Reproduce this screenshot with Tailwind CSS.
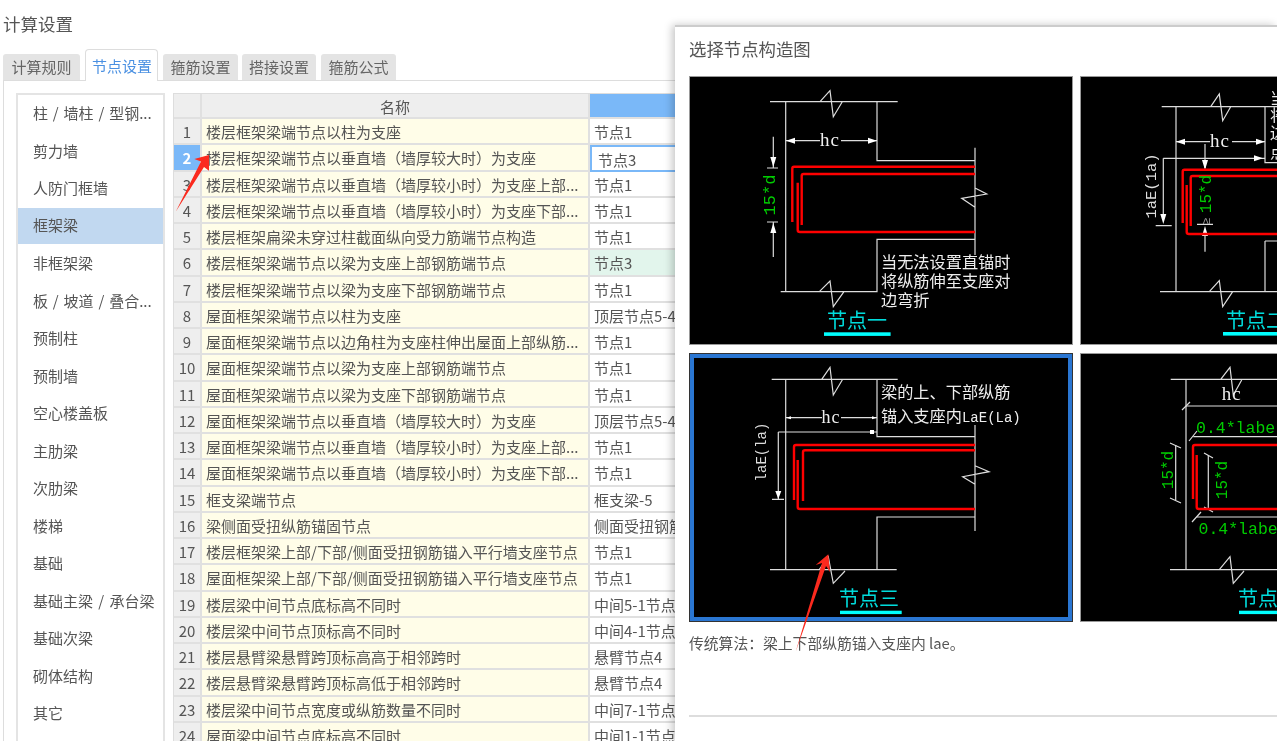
<!DOCTYPE html>
<html lang="zh">
<head>
<meta charset="utf-8">
<script src="https://cdn.jsdelivr.net/npm/@tailwindcss/browser@4"></script>
<title>计算设置</title>
</head>
<body class="bg-white">
<div class="relative w-[1277px] h-[741px] overflow-hidden bg-white text-[#555] font-['Noto_Sans_CJK_SC',sans-serif] blur-[0.35px]">
  <h1 class="pl-[3px] h-[49px] pt-[12px] text-[17.5px] leading-[24px] font-normal text-[#555]">计算设置</h1>
  <div class="flex items-end pl-[3px] h-[31px] text-[15px]">
    <div class="w-[77px] h-[26px] rounded-t-[3px] bg-[#e4e4e4] text-center leading-[26px] text-[#666]">计算规则</div>
    <div class="w-[73px] ml-[5px] pl-[1px] h-[32px] -mb-[1px] relative z-10 rounded-t-[4px] border border-b-0 border-[#ddd] bg-white text-center leading-[31px] text-[#4a90e2]">节点设置</div>
    <div class="w-[75px] ml-[5px] h-[26px] rounded-t-[3px] bg-[#e4e4e4] text-center leading-[26px] text-[#666]">箍筋设置</div>
    <div class="w-[74px] ml-[4px] h-[26px] rounded-t-[3px] bg-[#e4e4e4] text-center leading-[26px] text-[#666]">搭接设置</div>
    <div class="w-[75px] ml-[5px] h-[26px] rounded-t-[3px] bg-[#e4e4e4] text-center leading-[26px] text-[#666]">箍筋公式</div>
  </div>
  <div class="ml-[3px] flex items-start gap-[8px] border-l border-t border-[#ddd] pl-[12px] pt-[12px] h-[700px] text-[15px]">
    <div class="w-[149px] h-[700px] shrink-0 border-2 border-[#e4e4e4] text-[#555]">
      <div class="h-[37.5px] leading-[35px] pl-[15px] [word-spacing:1.5px]">柱 / 墙柱 / 型钢...</div>
      <div class="h-[37.5px] leading-[35px] pl-[15px]">剪力墙</div>
      <div class="h-[37.5px] leading-[35px] pl-[15px]">人防门框墙</div>
      <div class="h-[36px] leading-[34px] pl-[15px] my-[0.75px] bg-[#c1d8f0]">框架梁</div>
      <div class="h-[37.5px] leading-[35px] pl-[15px]">非框架梁</div>
      <div class="h-[37.5px] leading-[35px] pl-[15px] [word-spacing:1.5px]">板 / 坡道 / 叠合...</div>
      <div class="h-[37.5px] leading-[35px] pl-[15px]">预制柱</div>
      <div class="h-[37.5px] leading-[35px] pl-[15px]">预制墙</div>
      <div class="h-[37.5px] leading-[35px] pl-[15px]">空心楼盖板</div>
      <div class="h-[37.5px] leading-[35px] pl-[15px]">主肋梁</div>
      <div class="h-[37.5px] leading-[35px] pl-[15px]">次肋梁</div>
      <div class="h-[37.5px] leading-[35px] pl-[15px]">楼梯</div>
      <div class="h-[37.5px] leading-[35px] pl-[15px]">基础</div>
      <div class="h-[37.5px] leading-[35px] pl-[15px] [word-spacing:2px]">基础主梁 / 承台梁</div>
      <div class="h-[37.5px] leading-[35px] pl-[15px]">基础次梁</div>
      <div class="h-[37.5px] leading-[35px] pl-[15px]">砌体结构</div>
      <div class="h-[37.5px] leading-[35px] pl-[15px]">其它</div>
    </div>
    <div class="w-[510px] shrink-0 grid grid-cols-[28px_388px_94px] grid-rows-[25px] auto-rows-[26.25px] border-l border-t border-[#ddd] leading-[25px] whitespace-nowrap [&>div]:overflow-hidden [&>div]:border-b-2 [&>div]:border-r-2 [&>div]:border-[#e0e0e0] [&>div:nth-child(3n+1)]:bg-[#eee] [&>div:nth-child(3n+1)]:text-center [&>div:nth-child(3n+2)]:bg-[#fffde8] [&>div:nth-child(3n+2)]:pl-[4px] [&>div:nth-child(3n)]:pl-[4px]">
      <div></div><div class="!bg-[#eee] text-center !pl-0">名称</div><div class="!bg-[#7ab8f8]"></div>
      <div>1</div><div>楼层框架梁端节点以柱为支座</div><div>节点1</div>
      <div class="!bg-[#7ab8f8] text-white font-bold">2</div><div>楼层框架梁端节点以垂直墙（墙厚较大时）为支座</div><div class="!pl-[6px] !border-2 !border-[#7ab8f8]">节点3</div>
      <div>3</div><div>楼层框架梁端节点以垂直墙（墙厚较小时）为支座上部...</div><div>节点1</div>
      <div>4</div><div>楼层框架梁端节点以垂直墙（墙厚较小时）为支座下部...</div><div>节点1</div>
      <div>5</div><div>楼层框架扁梁未穿过柱截面纵向受力筋端节点构造</div><div>节点1</div>
      <div>6</div><div>楼层框架梁端节点以梁为支座上部钢筋端节点</div><div class="bg-[#e2f5ec]">节点3</div>
      <div>7</div><div>楼层框架梁端节点以梁为支座下部钢筋端节点</div><div>节点1</div>
      <div>8</div><div>屋面框架梁端节点以柱为支座</div><div>顶层节点5-4</div>
      <div>9</div><div>屋面框架梁端节点以边角柱为支座柱伸出屋面上部纵筋...</div><div>节点1</div>
      <div>10</div><div>屋面框架梁端节点以梁为支座上部钢筋端节点</div><div>节点1</div>
      <div>11</div><div>屋面框架梁端节点以梁为支座下部钢筋端节点</div><div>节点1</div>
      <div>12</div><div>屋面框架梁端节点以垂直墙（墙厚较大时）为支座</div><div>顶层节点5-4</div>
      <div>13</div><div>屋面框架梁端节点以垂直墙（墙厚较小时）为支座上部...</div><div>节点1</div>
      <div>14</div><div>屋面框架梁端节点以垂直墙（墙厚较小时）为支座下部...</div><div>节点1</div>
      <div>15</div><div>框支梁端节点</div><div>框支梁-5</div>
      <div>16</div><div>梁侧面受扭纵筋锚固节点</div><div>侧面受扭钢筋</div>
      <div>17</div><div>楼层框架梁上部/下部/侧面受扭钢筋锚入平行墙支座节点</div><div>节点1</div>
      <div>18</div><div>屋面框架梁上部/下部/侧面受扭钢筋锚入平行墙支座节点</div><div>节点1</div>
      <div>19</div><div>楼层梁中间节点底标高不同时</div><div>中间5-1节点</div>
      <div>20</div><div>楼层梁中间节点顶标高不同时</div><div>中间4-1节点</div>
      <div>21</div><div>楼层悬臂梁悬臂跨顶标高高于相邻跨时</div><div>悬臂节点4</div>
      <div>22</div><div>楼层悬臂梁悬臂跨顶标高低于相邻跨时</div><div>悬臂节点4</div>
      <div>23</div><div>楼层梁中间节点宽度或纵筋数量不同时</div><div>中间7-1节点</div>
      <div>24</div><div>屋面梁中间节点底标高不同时</div><div>中间1-1节点</div>
    </div>
  </div>

  <!-- dialog over the page -->
  <div class="absolute left-[675px] top-[25px] w-[602px] h-[716px] bg-white border-t-2 border-[#ccc] shadow-[-3px_0_8px_rgba(0,0,0,0.22)] pl-[14px]">
    <div class="h-[49px] pt-[10px] text-[17.4px] leading-[24px] text-[#555]">选择节点构造图</div>
    <div class="grid grid-cols-[384px_384px] gap-x-[7px] gap-y-[8px] w-[775px]">
      <svg class="block w-[384px] h-[269px] bg-black border border-[#999]" viewBox="690 77 382 267" font-family="'Liberation Mono',monospace">
        <g fill="none" stroke="#ddd" stroke-width="1.2">
          <path d="M770 101.7H897.7M820 101.7L830 90.7L833.3 116.7L842.3 101.7M785.7 101.7V291.7M877 101.7V160.7H975M975 147.7V255M975 188L986.7 194L961.7 198.3L975 207.3M975 239.3H877V291.7H780.7M819.3 291.7L830 281L833.3 306.7L844 291.7"/>
          <path d="M785.7 140.7H820M841 140.7H877M773.3 136.7V168M767 168H778M767 222H778M773.3 222V257"/>
        </g>
        <g fill="#fff"><path d="M786 140.7l9-3v6zM877 140.7l-9-3v6zM773.3 167l-3-10h6zM773.3 223l-3 10h6z"/></g>
        <g fill="none" stroke="#f00" stroke-width="2.4"><path d="M792.3 222V168.5Q792.3 166.7 794 166.7H975M801.7 225V175.8Q801.7 174 803.5 174H975M797.7 182.7V230Q797.7 232 800 232H975"/></g>
        <text x="830" y="146" fill="#eee" font-size="19" letter-spacing="1" text-anchor="middle" font-family="'Liberation Serif',serif">hc</text>
        <text transform="translate(775 195) rotate(-90)" fill="#0c0" font-size="17" text-anchor="middle">15*d</text>
        <g fill="#eee" font-size="16.2" font-family="'Noto Sans CJK SC',sans-serif"><text x="881" y="268">当无法设置直锚时</text><text x="881" y="287">将纵筋伸至支座对</text><text x="881" y="306">边弯折</text></g>
        <text x="827" y="328" fill="#00dcdc" font-size="20" font-family="'Noto Sans CJK SC',sans-serif">节点一</text>
        <rect x="824" y="332.3" width="66.6" height="3.6" fill="#0ff"/>
      </svg>
      <svg class="block w-[384px] h-[269px] bg-black border border-[#999]" viewBox="1081 77 382 267" font-family="'Liberation Mono',monospace">
        <g fill="none" stroke="#ddd" stroke-width="1.2">
          <path d="M1161.7 106.7H1290M1210.7 106.7L1219.3 94L1222.7 120.7L1230.7 106.7M1176 106.7V291.7M1265 106.7V162.7H1290M1265 241H1290M1265 241V291.7M1160 291.7H1290M1209.3 291.7L1219.3 280.7L1222.7 306.7L1232.7 291.7"/>
          <path d="M1176 141.7H1210M1232 141.7H1265M1163.3 158.3H1265M1163.3 158.3V215M1155.7 225.7H1171.7M1205 144V168M1205 230V251.7M1197 224.3H1213"/>
        </g>
        <g fill="#fff"><path d="M1176 141.7l9-3v6zM1265 141.7l-9-3v6zM1263 158.3l-9-3v6zM1163.3 224l-3-10h6zM1205 170l-3-10h6zM1205 226l-3 10h6z"/></g>
        <g fill="none" stroke="#f00" stroke-width="2.4"><path d="M1182.7 223V171.5Q1182.7 169.7 1184.5 169.7H1290M1190.7 226V178Q1190.7 176 1192.5 176H1290M1186.7 185V232Q1186.7 234 1189 234H1290"/></g>
        <text x="1220" y="147" fill="#eee" font-size="19" letter-spacing="1" text-anchor="middle" font-family="'Liberation Serif',serif">hc</text>
        <text transform="translate(1156 186) rotate(-90)" fill="#ddd" font-size="15.5" text-anchor="middle">1aE(1a)</text>
        <text transform="translate(1211 194) rotate(-90)" fill="#0c0" font-size="16" text-anchor="middle">15*d</text>
        <text transform="translate(1210 221) rotate(-90)" fill="#999" font-size="12" text-anchor="middle" font-family="'Liberation Sans',sans-serif">≥</text>
        <g fill="#eee" font-size="16" font-family="'Noto Sans CJK SC',sans-serif"><text x="1270" y="104">当</text><text x="1270" y="121">将</text><text x="1270" y="139">边</text><text x="1270" y="158">点</text></g>
        <text x="1226" y="328" fill="#00dcdc" font-size="20" font-family="'Noto Sans CJK SC',sans-serif">节点二</text>
        <rect x="1223" y="332" width="66" height="3.6" fill="#0ff"/>
      </svg>
      <svg class="block w-[384px] h-[269px] bg-black border-[5px] border-[#2a76d2] outline outline-1 -outline-offset-1 outline-[#333]" viewBox="694 358 374 259" font-family="'Liberation Mono',monospace">
        <g fill="none" stroke="#ddd" stroke-width="1.2">
          <path d="M771.7 379.3H897.7M821.7 379.3L830 367.3L833.3 395L842.7 379.3M785.7 379.3V569.7M877 379.3V436.7H975M975 425V531M975 465.7L989 471.7L962.7 476.7L975 484.3M975 517H877V569.7M770 569.7H896.7M819.3 569.7L828.3 556.7L833.3 583.3L845 571"/>
          <path d="M785.7 417.7H822M841 417.7H877M778.3 432H877M778.3 432V499.3M772 499.3H784"/>
        </g>
        <g fill="#fff"><path d="M786 417.7l5-1.5v3zM877 417.7l-5-1.5v3zM870 430h4v4h-4zM778.3 499l-3-8h6z"/></g>
        <g fill="none" stroke="#f00" stroke-width="2.4"><path d="M794 500V447Q794 445 796 445H975M803 501V452.3Q803 450.3 805 450.3H975M797.7 460V507Q797.7 509 800 509H975"/></g>
        <text x="831" y="423" fill="#eee" font-size="18" letter-spacing="1" text-anchor="middle" font-family="'Liberation Serif',serif">hc</text>
        <text transform="translate(766 452) rotate(-90)" fill="#ddd" font-size="14" text-anchor="middle">laE(la)</text>
        <g fill="#eee" font-size="16.2" font-family="'Noto Sans CJK SC',sans-serif"><text x="881" y="397.5">梁的上、下部纵筋</text><text x="881" y="421.5">锚入支座内<tspan font-size="14" font-family="'Liberation Mono',monospace">LaE(La)</tspan></text></g>
        <text x="839" y="606" fill="#00dcdc" font-size="20" font-family="'Noto Sans CJK SC',sans-serif">节点三</text>
        <rect x="840" y="610.7" width="61.7" height="3.4" fill="#0ff"/>
      </svg>
      <svg class="block w-[384px] h-[269px] bg-black border border-[#999]" viewBox="1081 354 382 267" font-family="'Liberation Mono',monospace">
        <g fill="none" stroke="#ddd" stroke-width="1.2">
          <path d="M1170.7 379.3H1290M1220.7 379.3L1230 367.3L1233.3 395L1241.7 380M1186 379.3V569.7M1170 569.7H1290M1219.3 569.7L1230 556.7L1233.3 583.3L1244 571"/>
          <path d="M1186 406H1290M1193.3 436.7H1290M1196.7 517H1290M1175.7 445V500M1208.3 455V510"/>
          <path d="M1182 410L1190 402M1189 441L1197 431M1192 522L1201 512M1170 443L1181 448M1170 498L1181 503M1204 453L1213 458M1204 507L1213 512"/>
        </g>
        <g fill="none" stroke="#f00" stroke-width="2.4"><path d="M1193 499V447Q1193 445 1195 445H1290M1196.7 455V507Q1196.7 509 1199 509H1290"/></g>
        <text x="1231.7" y="400" fill="#eee" font-size="19" letter-spacing="1" text-anchor="middle" font-family="'Liberation Serif',serif">hc</text>
        <g fill="#0c0" font-size="16.5"><text x="1196" y="432.5">0.4*labe</text><text x="1198.5" y="534">0.4*labe</text></g>
        <text transform="translate(1173 470) rotate(-90)" fill="#0c0" font-size="16" text-anchor="middle">15*d</text>
        <text transform="translate(1227 480) rotate(-90)" fill="#0c0" font-size="16" text-anchor="middle">15*d</text>
        <text x="1238" y="605.5" fill="#00dcdc" font-size="20" font-family="'Noto Sans CJK SC',sans-serif">节点</text>
        <rect x="1239" y="610.7" width="50" height="3.4" fill="#0ff"/>
      </svg>
    </div>
    <p class="mt-[10px] h-[83px] text-[14.8px] leading-[22px] text-[#555] whitespace-nowrap">传统算法：梁上下部纵筋锚入支座内 lae。</p>
    <div class="h-[2px] bg-[#ddd]"></div>
  </div>

  <!-- red annotation arrows -->
  <svg class="absolute left-0 top-0 w-[1277px] h-[741px] pointer-events-none z-20" viewBox="0 0 1277 741">
    <polygon fill="#fb2a1e" points="209,155 194.3,159 201,161.5 175.7,211.7 204,167 209,170.7"/>
    <polygon fill="#fb2a1e" points="828.3,554.3 815.7,565 822,563 795.7,651.7 826,566 830,572"/>
  </svg>
</div>
</body>
</html>
